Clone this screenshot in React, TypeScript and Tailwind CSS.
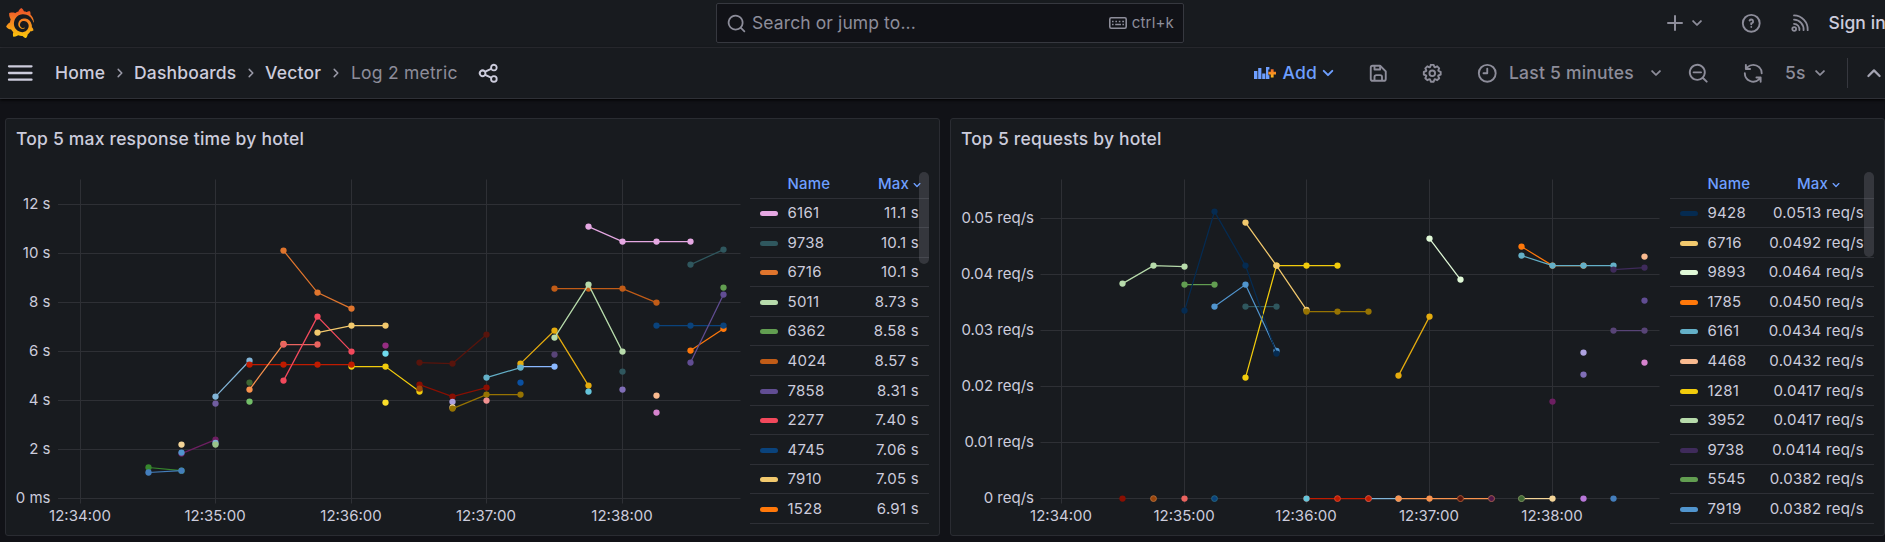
import type { ReactNode } from "react";
import { SiGrafana } from "react-icons/si";

type Point = [number, number];
type Series = { color: string; points: Point[] };
type Tick = { at: number; label: string };

const PATHS = {
  angleDown:
    "M17,9.17a1,1,0,0,0-1.41,0L12,12.71,8.46,9.17a1,1,0,0,0-1.41,0,1,1,0,0,0,0,1.42l4.24,4.24a1,1,0,0,0,1.42,0L17,10.59A1,1,0,0,0,17,9.17Z",
  search:
    "M21.71,20.29,18,16.61A9,9,0,1,0,16.61,18l3.68,3.68a1,1,0,0,0,1.42,0A1,1,0,0,0,21.71,20.29ZM11,18a7,7,0,1,1,7-7A7,7,0,0,1,11,18Z",
  searchMinus:
    "M21.71,20.29,18,16.61A9,9,0,1,0,16.61,18l3.68,3.68a1,1,0,0,0,1.42,0A1,1,0,0,0,21.71,20.29ZM11,18a7,7,0,1,1,7-7A7,7,0,0,1,11,18Zm4-8H7a1,1,0,0,0,0,2h8a1,1,0,0,0,0-2Z",
  share:
    "M18,14a4,4,0,0,0-3.08,1.48l-5.1-2.35a3.64,3.64,0,0,0,0-2.26l5.1-2.35A4,4,0,1,0,14,6a4.17,4.17,0,0,0,.07.71L8.79,9.14a4,4,0,1,0,0,5.72l5.28,2.43A4.17,4.17,0,0,0,14,18a4,4,0,1,0,4-4ZM18,4a2,2,0,1,1-2,2A2,2,0,0,1,18,4ZM6,14a2,2,0,1,1,2-2A2,2,0,0,1,6,14Zm12,6a2,2,0,1,1,2-2A2,2,0,0,1,18,20Z",
  save: "M20.71,9.29l-6-6a1,1,0,0,0-.32-.21A1.09,1.09,0,0,0,14,3H6A3,3,0,0,0,3,6V18a3,3,0,0,0,3,3H18a3,3,0,0,0,3-3V10A1,1,0,0,0,20.71,9.29ZM9,5h4V7H9Zm6,14H9V16a1,1,0,0,1,1-1h4a1,1,0,0,1,1,1Zm4-1a1,1,0,0,1-1,1H17V16a3,3,0,0,0-3-3H10a3,3,0,0,0-3,3v3H6a1,1,0,0,1-1-1V6A1,1,0,0,1,6,5H7V8A1,1,0,0,0,8,9h6a1,1,0,0,0,1-1V6.41l4,4Z",
  cog: "M21.32,9.55l-1.89-.63.89-1.78A1,1,0,0,0,20.13,6L18,3.87a1,1,0,0,0-1.15-.19l-1.78.89-.63-1.89A1,1,0,0,0,13.5,2h-3a1,1,0,0,0-.95.68L8.92,4.57,7.14,3.68A1,1,0,0,0,6,3.87L3.87,6a1,1,0,0,0-.19,1.15l.89,1.78-1.89.63A1,1,0,0,0,2,10.5v3a1,1,0,0,0,.68.95l1.89.63-.89,1.78A1,1,0,0,0,3.87,18L6,20.13a1,1,0,0,0,1.15.19l1.78-.89.63,1.89a1,1,0,0,0,.95.68h3a1,1,0,0,0,.95-.68l.63-1.89,1.78.89A1,1,0,0,0,18,20.13L20.13,18a1,1,0,0,0,.19-1.15l-.89-1.78,1.89-.63A1,1,0,0,0,22,13.5v-3A1,1,0,0,0,21.32,9.55ZM20,12.78l-1.2.4A2,2,0,0,0,17.64,16l.57,1.14-1.1,1.1L16,17.64a2,2,0,0,0-2.79,1.16l-.4,1.2H11.22l-.4-1.2A2,2,0,0,0,8,17.64l-1.14.57-1.1-1.1L6.36,16A2,2,0,0,0,5.2,13.18L4,12.78V11.22l1.2-.4A2,2,0,0,0,6.36,8L5.79,6.89l1.1-1.1L8,6.36A2,2,0,0,0,10.82,5.2l.4-1.2h1.56l.4,1.2A2,2,0,0,0,16,6.36l1.14-.57,1.1,1.1L17.64,8a2,2,0,0,0,1.16,2.79l1.2.4ZM12,8a4,4,0,1,0,4,4A4,4,0,0,0,12,8Zm0,6a2,2,0,1,1,2-2A2,2,0,0,1,12,14Z",
  clock:
    "M12,2A10,10,0,1,0,22,12,10,10,0,0,0,12,2Zm0,18a8,8,0,1,1,8-8A8,8,0,0,1,12,20ZM12,6a1,1,0,0,0-1,1v4H8a1,1,0,0,0,0,2h4a1,1,0,0,0,1-1V7A1,1,0,0,0,12,6Z",
  sync: "M19.91,15.51H15.38a1,1,0,0,0,0,2h2.4A8,8,0,0,1,4,12a1,1,0,0,0-2,0,10,10,0,0,0,16.88,7.23V21a1,1,0,0,0,2,0V16.5A1,1,0,0,0,19.91,15.51ZM12,2A10,10,0,0,0,5.12,4.77V3a1,1,0,0,0-2,0V7.5a1,1,0,0,0,1,1h4.5a1,1,0,0,0,0-2H6.22A8,8,0,0,1,20,12a1,1,0,0,0,2,0A10,10,0,0,0,12,2Z",
  question:
    "M11.29,15.29a1.58,1.58,0,0,0-.12.15.76.76,0,0,0-.09.18.64.64,0,0,0-.06.18,1.36,1.36,0,0,0,0,.2.84.84,0,0,0,.08.38.9.9,0,0,0,.54.54.94.94,0,0,0,.76,0,.9.9,0,0,0,.54-.54A1,1,0,0,0,13,16a1,1,0,0,0-.29-.71A1,1,0,0,0,11.29,15.29ZM12,2A10,10,0,1,0,22,12,10,10,0,0,0,12,2Zm0,18a8,8,0,1,1,8-8A8,8,0,0,1,12,20ZM12,7A3,3,0,0,0,9.4,8.5a1,1,0,1,0,1.73,1A1,1,0,0,1,12,9a1,1,0,0,1,0,2,1,1,0,0,0-1,1v1a1,1,0,0,0,2,0v-.18A3,3,0,0,0,12,7Z",
  plus: "M19,11H13V5a1,1,0,0,0-2,0v6H5a1,1,0,0,0,0,2h6v6a1,1,0,0,0,2,0V13h6a1,1,0,0,0,0-2Z",
};

function Icon({ name, className }: { name: keyof typeof PATHS; className: string }) {
  return (
    <svg viewBox="0 0 24 24" fill="currentColor" className={`block shrink-0 ${className}`}>
      <path d={PATHS[name]} />
    </svg>
  );
}

function MenuIcon() {
  return (
    <svg viewBox="0 0 26 18" className="h-[18px] w-[26px] shrink-0" stroke="#ccccdc" strokeWidth="2.3" strokeLinecap="round">
      <path d="M2 2.3H24.5M2 9H24.5M2 15.7H24.5" />
    </svg>
  );
}

function RssIcon() {
  return (
    <svg viewBox="0 0 18 18" className="h-[18px] w-[18px] shrink-0" fill="none" stroke="currentColor" strokeWidth="1.8" strokeLinecap="round">
      <circle cx="3.2" cy="15" r="1.9" />
      <path d="M3 9.8a5.6 5.6 0 0 1 5.4 6.4M3 5.6a9.8 9.8 0 0 1 9.6 10.6M3 1.4a14 14 0 0 1 13.7 14.8" />
    </svg>
  );
}

function KeyboardIcon() {
  return (
    <svg viewBox="0 0 18 12" className="ml-auto h-3 w-[18px] shrink-0" fill="none" stroke="currentColor">
      <rect x="0.8" y="0.8" width="16.4" height="10.4" rx="1.4" strokeWidth="1.6" />
      <path d="M3 4.4h1.6M6.4 4.4H8M9.8 4.4h1.6M13.2 4.4h1.8M3 7.6h1.6M6.2 7.6h5.8M13.4 7.6H15" strokeWidth="1.5" />
    </svg>
  );
}

function PanelAddIcon() {
  return (
    <svg viewBox="0 0 22 14" className="h-[14px] w-[22px] shrink-0">
      <path
        fill="#6e9fff"
        d="M0 5h3.4v8H0zM4.2 2h3.2v11H4.2zM8.2 7.4h3.2V13H8.2zM12 1h3.4v2.6h-1.1v5.6h1.1V13H12z"
      />
      <path fill="url(#plus-fill)" d="M16.8 3.2h2.8v2.6h2.4v2.8h-2.4v2.8h-2.8V8.6h-2.4V5.8h2.4z" />
    </svg>
  );
}

function Gradients() {
  return (
    <svg className="absolute h-0 w-0" aria-hidden="true">
      <defs>
        <linearGradient id="brand-fill" x1="0" y1="0" x2="0" y2="1">
          <stop offset="0.1" stopColor="#f05a28" />
          <stop offset="0.5" stopColor="#f68b1f" />
          <stop offset="1" stopColor="#fbca0a" />
        </linearGradient>
        <linearGradient id="plus-fill" x1="0" y1="0" x2="0" y2="1">
          <stop offset="0" stopColor="#f0682a" />
          <stop offset="1" stopColor="#fbb81a" />
        </linearGradient>
      </defs>
    </svg>
  );
}

function CrumbArrow() {
  return (
    <svg viewBox="0 0 8 10" className="h-[10px] w-2 shrink-0" fill="none" stroke="#9a9aa8" strokeWidth="1.5" strokeLinecap="round" strokeLinejoin="round">
      <path d="M2.2 1.4 5.8 5 2.2 8.6" />
    </svg>
  );
}

function TopBar() {
  return (
    <div className="flex h-12 items-center border-b border-[#2e3036] pb-[1px] text-[#8d8d9a]">
      <SiGrafana fill="url(#brand-fill)" className="ml-[5px] h-[30px] w-[30px] shrink-0" />
      <div className="ml-[681px] flex h-10 w-[468px] shrink-0 items-center rounded-[2px] border border-[#36383f] bg-[#111217]">
        <Icon name="search" className="ml-[9px] h-[21px] w-[21px]" />
        <span className="ml-[5px] text-[17.5px] tracking-[0.006em]">Search or jump to...</span>
        <KeyboardIcon />
        <span className="ml-[5px] mr-[9px] text-[15px] tracking-[0.0125em]">ctrl+k</span>
      </div>
      <Icon name="plus" className="ml-[479px] h-6 w-6" />
      <Icon name="angleDown" className="-ml-px h-[22px] w-[22px]" />
      <div className="ml-[16px] h-[30px] w-px bg-[#36383f]" />
      <Icon name="question" className="ml-[16px] h-[22.5px] w-[22.5px]" />
      <div className="ml-[28px]">
        <RssIcon />
      </div>
      <span className="ml-[20px] shrink-0 whitespace-nowrap text-[17.5px] font-medium tracking-[0.005em] text-[#ccccdc]">Sign in</span>
    </div>
  );
}

function Crumb({ className, children }: { className: string; children: ReactNode }) {
  return <span className={`shrink-0 whitespace-nowrap ${className}`}>{children}</span>;
}

function Toolbar() {
  return (
    <div className="flex h-[51px] items-center border-b border-[#2e3036] text-[17.5px] font-medium tracking-[0.0125em] text-[#8d8d9a] shadow-[0_1px_3px_#000]">
      <div className="ml-[7px]">
        <MenuIcon />
      </div>
      <Crumb className="ml-[22px] w-[61px] tracking-[0.01em] text-[#ccccdc]">Home</Crumb>
      <CrumbArrow />
      <Crumb className="ml-[10px] w-[113px] tracking-[0.01em] text-[#ccccdc]">Dashboards</Crumb>
      <CrumbArrow />
      <Crumb className="ml-[10px] w-[67px] text-[#ccccdc]">Vector</Crumb>
      <CrumbArrow />
      <Crumb className="ml-[11px] w-[126px] font-normal">Log 2 metric</Crumb>
      <Icon name="share" className="h-[22.5px] w-[22.5px] text-[#ccccdc]" />
      <div className="ml-[754px]">
        <PanelAddIcon />
      </div>
      <Crumb className="ml-[7px] w-[33px] text-[#6e9fff]">Add</Crumb>
      <Icon name="angleDown" className="h-6 w-6 text-[#6e9fff]" />
      <Icon name="save" className="ml-[27px] h-[22.5px] w-[22.5px]" />
      <Icon name="cog" className="ml-[32px] h-[22.5px] w-[22.5px]" />
      <Icon name="clock" className="ml-[32px] h-[22.5px] w-[22.5px]" />
      <Crumb className="ml-[11px] w-[136px]">Last 5 minutes</Crumb>
      <Icon name="angleDown" className="h-[22px] w-[22px]" />
      <Icon name="searchMinus" className="ml-[20px] h-[22.5px] w-[22.5px]" />
      <Icon name="sync" className="ml-[32px] h-[22.5px] w-[22.5px]" />
      <Crumb className="ml-[21px] w-[24px]">5s</Crumb>
      <Icon name="angleDown" className="h-[22px] w-[22px]" />
      <div className="ml-[16px] h-[30px] w-px shrink-0 bg-[#36383f]" />
      <svg viewBox="0 0 16 10" className="ml-[18px] h-[10px] w-4 shrink-0" fill="none" stroke="#a5a5b3" strokeWidth="2.2" strokeLinecap="round" strokeLinejoin="round">
        <path d="M2.4 8 8 2.4 13.6 8" />
      </svg>
    </div>
  );
}

const line = (color: string, ...points: Point[]): Series => ({ color, points });

const responseSeries: Series[] = [
  line("#37872d", [148.5, 467.5], [181.5, 470.7]),
  line("#447ebc", [148.5, 472.5], [181.5, 470.7]),
  line("#f4d598", [181.5, 444.6]),
  line("#6d1f62", [181.5, 453.6], [215.5, 439.6]),
  line("#5195ce", [181.5, 452.6]),
  line("#82b5d8", [215.5, 443]),
  line("#9ac48a", [215.5, 444.6]),
  line("#82b5d8", [215.5, 396.6], [249.5, 360.7]),
  line("#705da0", [215.5, 403.6]),
  line("#f2cc0c", [351.5, 366.6], [385.5, 366.6], [419.5, 391.5]),
  line("#bf1b00", [249.5, 364.6], [283.5, 364.6], [317.5, 364.6], [351.5, 364.6]),
  line("#3f6833", [249.5, 382.6]),
  line("#f9934e", [249.5, 389.6], [283.5, 343.8]),
  line("#73bf69", [249.5, 401.6]),
  line("#ea6460", [283.5, 344.5], [317.5, 344.5]),
  line("#f2495c", [283.5, 380.6], [317.5, 316.6], [351.5, 351.6]),
  line("#e0752d", [283.5, 250.6], [317.5, 292.6], [351.5, 308.6]),
  line("#f2c96d", [317.5, 332.6], [351.5, 325.6], [385.5, 325.6]),
  line("#962d82", [385.5, 345.6]),
  line("#70dbed", [385.5, 353.6]),
  line("#fade2a", [385.5, 402.6]),
  line("#58140c", [419.5, 362.6], [452.5, 363.6], [486.5, 334.6]),
  line("#890f02", [419.5, 384.6], [452.5, 396.6], [486.5, 387.6]),
  line("#99440a", [419.5, 388.6]),
  line("#aea2e0", [452.5, 401.8]),
  line("#f4d598", [452.5, 407.4]),
  line("#967302", [452.5, 408.6], [486.5, 394.6], [520.5, 394.6]),
  line("#f29191", [486.5, 400.6]),
  line("#8ab8ff", [520.5, 366.6], [554.5, 366.6]),
  line("#e5ac0e", [520.5, 363.6], [554.5, 330.6], [588.5, 385.6]),
  line("#64b0c8", [486.5, 377.6], [520.5, 367.6]),
  line("#0a50a1", [520.5, 382.6]),
  line("#584477", [554.5, 354.6]),
  line("#c15c17", [554.5, 288.6], [588.5, 288.6], [622.5, 288.6], [656.5, 302.6]),
  line("#b7dbab", [554.5, 337.6], [588.5, 284.6], [622.5, 351.6]),
  line("#65c5db", [588.5, 391.6]),
  line("#e5a8e2", [588.5, 226.6], [622.5, 241.6], [656.5, 241.6], [690.5, 241.6]),
  line("#2f575e", [690.5, 264.6], [723.5, 249.6]),
  line("#2f575e", [622.5, 371.6]),
  line("#806eb7", [622.5, 389.6]),
  line("#f9ba8f", [656.5, 395.6]),
  line("#d683ce", [656.5, 412.6]),
  line("#ff780a", [690.5, 350.6], [723.5, 328.8]),
  line("#0a437c", [656.5, 325.6], [690.5, 325.6], [723.5, 325.6]),
  line("#614d93", [690.5, 362.6], [723.5, 294.6]),
  line("#629e51", [723.5, 287.6]),
];

const requestSeries: Series[] = [
  line("#b7dbab", [1122.5, 283.6], [1153.5, 265.6], [1184.5, 266.6]),
  line("#629e51", [1184.5, 284.6], [1214.5, 284.6]),
  line("#2f575e", [1245.5, 306.6], [1276.5, 306.6]),
  line("#f2cc0c", [1245.5, 377.6], [1276.5, 265.6], [1306.5, 265.6], [1337.5, 265.6]),
  line("#f2c96d", [1245.5, 222.6], [1276.5, 265.6], [1306.5, 309.8]),
  line("#5195ce", [1214.5, 306.6], [1245.5, 284.6], [1276.5, 350.8]),
  line("#052b51", [1184.5, 310.6], [1214.5, 211.6], [1245.5, 265.6], [1276.5, 353.6]),
  line("#967302", [1306.5, 311.6], [1337.5, 311.6], [1368.5, 311.6]),
  line("#e5ac0e", [1398.5, 375.6], [1429.5, 316.6]),
  line("#e0f9d7", [1429.5, 238.6], [1460.5, 279.6]),
  line("#ff780a", [1521.5, 246.6], [1552.5, 265.6], [1583.5, 265.6]),
  line("#64b0c8", [1521.5, 255.6], [1552.5, 265.6], [1583.5, 265.6], [1613.5, 265.6]),
  line("#3f2b5b", [1613.5, 269.6], [1644.5, 267.6]),
  line("#f9ba8f", [1644.5, 256.6]),
  line("#614d93", [1644.5, 300.6]),
  line("#584477", [1613.5, 330.6], [1644.5, 330.6]),
  line("#d683ce", [1644.5, 362.6]),
  line("#aea2e0", [1583.5, 352.6]),
  line("#806eb7", [1583.5, 374.6]),
  line("#6d1f62", [1552.5, 401.6]),
  line("#82b5d8", [1368.5, 498.6], [1398.5, 498.6]),
  line("#bf1b00", [1306.5, 498.6], [1337.5, 498.6], [1368.5, 498.6]),
  line("#65c5db", [1306.5, 498.6]),
  line("#f9934e", [1398.5, 498.6], [1429.5, 498.6], [1460.5, 498.6], [1491.5, 498.6]),
  line("#f4d598", [1521.5, 498.6], [1552.5, 498.6]),
  line("#890f02", [1122.5, 498.6]),
  line("#99440a", [1153.5, 498.6]),
  line("#ea6460", [1184.5, 498.6]),
  line("#0a437c", [1214.5, 498.6]),
  line("#58140c", [1460.5, 498.6]),
  line("#511749", [1491.5, 498.6]),
  line("#3f6833", [1521.5, 498.6]),
  line("#b877d9", [1583.5, 498.6]),
  line("#447ebc", [1613.5, 498.6]),
];

const rings: [number, number, string][] = [
  [1153.5, 498.6, "#b5794c"],
  [1214.5, 498.6, "#2f6f7e"],
  [1337.5, 498.6, "#d8553c"],
  [1368.5, 498.6, "#d8553c"],
  [1460.5, 498.6, "#a85a38"],
  [1491.5, 498.6, "#a0624f"],
  [1521.5, 498.6, "#6f8a5c"],
];

type ChartProps = {
  viewBox: string;
  className: string;
  xTicks: Tick[];
  yTicks: Tick[];
  plotLeft: number;
  plotRight: number;
  labelRight: number;
  series: Series[];
  outlines?: typeof rings;
};

function Chart({ viewBox, className, xTicks, yTicks, plotLeft, plotRight, labelRight, series, outlines = [] }: ChartProps) {
  return (
    <svg viewBox={viewBox} className={`block shrink-0 ${className}`}>
      <g stroke="#2e3035" strokeWidth="1">
        {yTicks.map((t) => (
          <line key={t.label} x1={plotLeft} x2={plotRight} y1={t.at} y2={t.at} />
        ))}
        {xTicks.map((t) => (
          <line key={t.label} x1={t.at} x2={t.at} y1={179.5} y2={503.5} />
        ))}
      </g>
      <g fill="#ccccdc" className="text-[15px]">
        {yTicks.map((t) => (
          <text key={t.label} x={labelRight} y={t.at + 4.7} textAnchor="end">
            {t.label}
          </text>
        ))}
        {xTicks.map((t) => (
          <text key={t.label} x={t.at - 0.5} y={521} textAnchor="middle">
            {t.label}
          </text>
        ))}
      </g>
      {series.map((s, i) => (
        <g key={i}>
          <polyline points={s.points.map((p) => p.join(",")).join(" ")} fill="none" stroke={s.color} strokeWidth="1.25" />
          {s.points.map(([x, y]) => (
            <circle key={x} cx={x} cy={y} r="3.15" fill={s.color} />
          ))}
        </g>
      ))}
      {outlines.map(([x, y, c]) => (
        <circle key={x} cx={x} cy={y} r="2.9" fill="none" stroke={c} strokeWidth="0.7" />
      ))}
    </svg>
  );
}

type LegendRow = { color: string; name: string; value: string; tall: boolean };

const legendRows = (rows: [string, string, string][]): LegendRow[] =>
  rows.map(([color, name, value], i) => ({ color, name, value, tall: [1, 3, 5, 6, 8, 10].includes(i) }));

const responseLegend = legendRows([
  ["#e5a8e2", "6161", "11.1 s"],
  ["#2f575e", "9738", "10.1 s"],
  ["#e0752d", "6716", "10.1 s"],
  ["#b7dbab", "5011", "8.73 s"],
  ["#629e51", "6362", "8.58 s"],
  ["#c15c17", "4024", "8.57 s"],
  ["#614d93", "7858", "8.31 s"],
  ["#f2495c", "2277", "7.40 s"],
  ["#0a437c", "4745", "7.06 s"],
  ["#f2c96d", "7910", "7.05 s"],
  ["#ff780a", "1528", "6.91 s"],
]);

const requestLegend = legendRows([
  ["#052b51", "9428", "0.0513 req/s"],
  ["#f2c96d", "6716", "0.0492 req/s"],
  ["#e0f9d7", "9893", "0.0464 req/s"],
  ["#ff780a", "1785", "0.0450 req/s"],
  ["#64b0c8", "6161", "0.0434 req/s"],
  ["#f9ba8f", "4468", "0.0432 req/s"],
  ["#f2cc0c", "1281", "0.0417 req/s"],
  ["#b7dbab", "3952", "0.0417 req/s"],
  ["#3f2b5b", "9738", "0.0414 req/s"],
  ["#629e51", "5545", "0.0382 req/s"],
  ["#5195ce", "7919", "0.0382 req/s"],
]);

function Legend({ rows, className, sortClass, thumbClass }: { rows: LegendRow[]; className: string; sortClass: string; thumbClass: string }) {
  return (
    <div className={`relative shrink-0 text-[15px] tracking-[0.018em] ${className}`}>
      <div className="flex h-[30px] items-center border-b border-[#2e3036] pt-[2px] font-medium tracking-[0.01em] text-[#6e9fff]">
        <span className="ml-[37.5px]">Name</span>
        <span className={`ml-auto flex items-center ${sortClass}`}>
          Max
          <Icon name="angleDown" className="h-[16px] w-[16px]" />
        </span>
      </div>
      {rows.map((r) => (
        <div key={r.name} className={`flex items-center border-b border-[#2e3036] text-[#ccccdc] ${r.tall ? "h-[30px] pt-px" : "h-[29px]"}`}>
          <span className="ml-[10px] h-[5px] w-[18px] rounded-full" style={{ backgroundColor: r.color }} />
          <span className="ml-[9.5px]">{r.name}</span>
          <span className="ml-auto mr-[10px]">{r.value}</span>
        </div>
      ))}
      <div className={`absolute right-0 top-[3px] w-[10px] rounded-full bg-[#ccccdc29] ${thumbClass}`} />
    </div>
  );
}

function Panel({ title, children }: { title: string; children: ReactNode }) {
  return (
    <section className="h-[418px] w-[935px] shrink-0 rounded-[3px] border border-[#2a2c32] bg-[#181b1f]">
      <h2 className="flex h-10 items-center pl-[10px] text-[17.5px] font-medium tracking-[0.0115em]">{title}</h2>
      <div className="flex">{children}</div>
    </section>
  );
}

const responseX: Tick[] = [
  { at: 80.5, label: "12:34:00" },
  { at: 215.5, label: "12:35:00" },
  { at: 351.5, label: "12:36:00" },
  { at: 486.5, label: "12:37:00" },
  { at: 622.5, label: "12:38:00" },
];
const responseY: Tick[] = [
  { at: 204.5, label: "12 s" },
  { at: 253.5, label: "10 s" },
  { at: 302.5, label: "8 s" },
  { at: 351.5, label: "6 s" },
  { at: 400.5, label: "4 s" },
  { at: 449.5, label: "2 s" },
  { at: 498.5, label: "0 ms" },
];
const requestX: Tick[] = [
  { at: 1061.5, label: "12:34:00" },
  { at: 1184.5, label: "12:35:00" },
  { at: 1306.5, label: "12:36:00" },
  { at: 1429.5, label: "12:37:00" },
  { at: 1552.5, label: "12:38:00" },
];
const requestY: Tick[] = [
  { at: 218.5, label: "0.05 req/s" },
  { at: 274.5, label: "0.04 req/s" },
  { at: 330.5, label: "0.03 req/s" },
  { at: 386.5, label: "0.02 req/s" },
  { at: 442.5, label: "0.01 req/s" },
  { at: 498.5, label: "0 req/s" },
];

export default function App() {
  return (
    <div className="h-[542px] w-[1885px] overflow-hidden bg-[#111217] font-['Inter',sans-serif] text-[#ccccdc]">
      <Gradients />
      <header className="bg-[#181b1f]">
        <TopBar />
        <Toolbar />
      </header>
      <main className="flex gap-[10px] pl-[5px] pt-[19px]">
        <Panel title="Top 5 max response time by hotel">
          <Chart
            viewBox="6 159 744 376"
            className="h-[376px] w-[744px]"
            xTicks={responseX}
            yTicks={responseY}
            plotLeft={58}
            plotRight={740.5}
            labelRight={50.5}
            series={responseSeries}
          />
          <Legend rows={responseLegend} className="mt-[10px] w-[179px]" sortClass="mr-[4px]" thumbClass="h-[92px]" />
        </Panel>
        <Panel title="Top 5 requests by hotel">
          <Chart
            viewBox="951 159 719 376"
            className="h-[376px] w-[719px]"
            xTicks={requestX}
            yTicks={requestY}
            plotLeft={1040.5}
            plotRight={1659.5}
            labelRight={1034}
            series={requestSeries}
            outlines={rings}
          />
          <Legend rows={requestLegend} className="mt-[10px] w-[204px]" sortClass="mr-[30px]" thumbClass="h-[85px]" />
        </Panel>
      </main>
    </div>
  );
}
